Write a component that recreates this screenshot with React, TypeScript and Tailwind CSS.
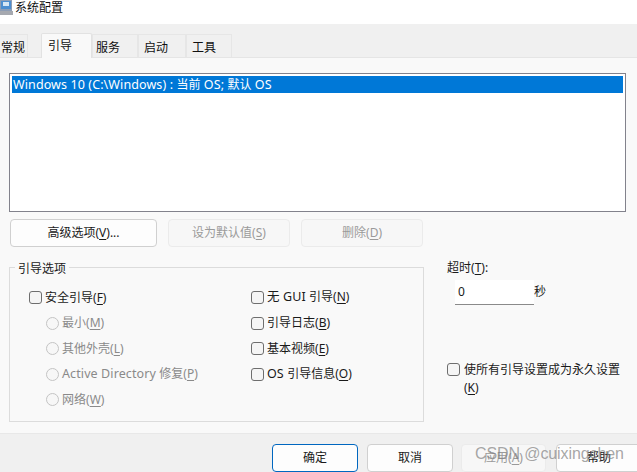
import { ReactNode } from "react";

const FONT = "font-['Noto_Sans','Noto_Sans_CJK_SC',sans-serif]";

function Key({ k }: { k: string }) {
  return (
    <>
      (<span className="underline underline-offset-2">{k}</span>)
    </>
  );
}

// latin runs are a little wider than the CJK size in the reference
function Latin({ children }: { children: ReactNode }) {
  return <span className="text-[12.5px] tracking-[0.1px]">{children}</span>;
}

function DialogButton({
  children,
  disabled,
  primary,
  className,
}: {
  children: ReactNode;
  disabled?: boolean;
  primary?: boolean;
  className: string;
}) {
  let look = "border-[#d0d0d0] bg-[#fdfdfd] text-[#1a1a1a]";
  if (disabled) look = "border-[#ebebeb] bg-[#f7f7f7] text-[#9a9a9a]";
  if (primary) look = "border-[#0067c0] bg-[#fdfdfd] text-[#1a1a1a]";
  return (
    <div
      className={`flex h-[28px] shrink-0 items-center justify-center rounded-[4px] border text-[12px] ${look} ${className}`}
    >
      {children}
    </div>
  );
}

function Check({ children }: { children: ReactNode }) {
  return (
    <div className="flex h-[25.5px] items-center text-[12px] text-[#1a1a1a]">
      <span className="mr-[3px] h-[13px] w-[13px] shrink-0 rounded-[3px] border border-[#6e6e6e] bg-[#f5f5f5]" />
      <span>{children}</span>
    </div>
  );
}

function Radio({ children }: { children: ReactNode }) {
  return (
    <div className="flex h-[25.5px] items-center pl-[17px] text-[12px] text-[#8a8a8a]">
      <span className="mr-[3px] h-[13px] w-[13px] shrink-0 rounded-full border border-[#c4c4c4] bg-[#f7f7f7]" />
      <span>{children}</span>
    </div>
  );
}

function Tab({ label, active, className }: { label: string; active?: boolean; className: string }) {
  if (active) {
    return (
      <div
        className={`z-10 -mb-px flex h-[25px] items-center justify-start rounded-t-[2px] border border-b-0 border-[#e2e2e2] bg-[#f9f9f9] pb-[1px] text-[12px] text-[#111] ${className}`}
      >
        {label}
      </div>
    );
  }
  return (
    <div
      className={`flex h-[23px] items-center justify-start border border-b-0 border-[#e6e6e6] bg-[#f0f0f0] pt-[3px] text-[12px] text-[#111] ${className}`}
    >
      {label}
    </div>
  );
}

export default function App() {
  return (
    <div className={`relative flex h-[472px] w-[637px] flex-col overflow-hidden bg-[#f9f9f9] ${FONT}`}>
      {/* title bar */}
      <div className="flex h-[24px] shrink-0 items-start bg-white">
        <svg width="14" height="16" viewBox="0 0 14 16" className="mr-[1px] shrink-0">
          <rect x="0" y="0" width="12" height="11" fill="#8d9db5" />
          <rect x="1" y="1" width="10" height="8" fill="#4d8ed0" />
          <rect x="3" y="2" width="6" height="4" fill="#d6e6f5" />
          <rect x="0" y="11" width="13" height="4" fill="#a6a9b0" />
        </svg>
        <span className="text-[12px] leading-[16px] text-[#111]">系统配置</span>
      </div>

      {/* tab strip */}
      <div className="flex h-[34px] shrink-0 items-end border-b border-[#e5e5e5] bg-[#f0f0f0]">
        <Tab label="常规" className="-ml-[1px] w-[29px] pl-[1px]" />
        <div className="w-[13px]" />
        <Tab label="引导" active className="w-[51px] pl-[6px]" />
        <Tab label="服务" className="w-[46px] pl-[3px]" />
        <Tab label="启动" className="w-[48px] pl-[5px]" />
        <Tab label="工具" className="w-[46px] pl-[5px]" />
      </div>

      {/* body */}
      <div className="flex flex-1 flex-col px-[9px] pt-[15px]">
        <div className="h-[139px] w-[617px] border border-[#82828c] bg-white p-[2px]">
          <div className="flex h-[17px] items-center whitespace-pre bg-[#0078d7] pt-[1px] pl-[1px] text-[12px] text-white">
            <Latin>Windows 10 (C:\Windows) : </Latin>当前<Latin> OS; </Latin>默认<Latin> OS</Latin>
          </div>
        </div>

        <div className="mt-[7px] flex pl-[1px]">
          <DialogButton className="w-[147px]">
            高级选项
            <Key k="V" />
            ...
          </DialogButton>
          <DialogButton disabled className="ml-[11px] w-[122px]">
            设为默认值
            <Key k="S" />
          </DialogButton>
          <DialogButton disabled className="ml-[11px] w-[122px]">
            删除
            <Key k="D" />
          </DialogButton>
        </div>

        <div className="mt-[20px] flex">
          <div className="relative h-[155px] w-[415px] border border-[#dcdcdc] pt-[17px] pl-[19px]">
            <span className="absolute -top-[8px] left-[5px] bg-[#f9f9f9] px-[3px] text-[12px] text-[#1a1a1a]">
              引导选项
            </span>
            <div className="grid grid-cols-[222px_1fr]">
              <div>
                <Check>
                  安全引导
                  <Key k="F" />
                </Check>
                <Radio>
                  最小
                  <Key k="M" />
                </Radio>
                <Radio>
                  其他外壳
                  <Key k="L" />
                </Radio>
                <Radio>
                  <Latin>Active Directory </Latin>修复
                  <Key k="P" />
                </Radio>
                <Radio>
                  网络
                  <Key k="W" />
                </Radio>
              </div>
              <div>
                <Check>
                  <Latin>无 GUI </Latin>引导
                  <Key k="N" />
                </Check>
                <Check>
                  引导日志
                  <Key k="B" />
                </Check>
                <Check>
                  基本视频
                  <Key k="E" />
                </Check>
                <Check>
                  <Latin>OS </Latin>引导信息
                  <Key k="O" />
                </Check>
              </div>
            </div>
          </div>

          <div className="ml-[23px] flex w-[180px] flex-col text-[12px] text-[#1a1a1a]">
            <div className="-mt-[8px] leading-[17px]">
              超时
              <Key k="T" />:
            </div>
            <div className="mt-[4px] flex items-center pl-[8px]">
              <div className="flex h-[25px] w-[79px] items-center border-b border-[#8a8a8a] bg-white pb-[1px] pl-[3px]">
                0
              </div>
              <span className="-mt-[1px]">秒</span>
            </div>
            <div className="mt-[56px] flex items-start">
              <span className="mt-[2px] mr-[4px] h-[13px] w-[13px] shrink-0 rounded-[3px] border border-[#6e6e6e] bg-[#f5f5f5]" />
              <span className="leading-[18px]">
                使所有引导设置成为永久设置
                <br />
                <Key k="K" />
              </span>
            </div>
          </div>
        </div>
      </div>

      {/* footer */}
      <div className="flex h-[39px] shrink-0 items-start justify-start border-t border-[#e8e8e8] bg-[#f0f0f0] pt-[10px] pl-[272px]">
        <DialogButton primary className="w-[86px]">
          确定
        </DialogButton>
        <DialogButton className="ml-[9px] w-[86px]">取消</DialogButton>
        <DialogButton disabled className="ml-[8px] w-[85px]">
          应用
          <Key k="A" />
        </DialogButton>
        <DialogButton className="ml-[10px] w-[86px]">帮助</DialogButton>
      </div>

      {/* watermark */}
      <span className="absolute top-[444px] left-[475px] font-['Liberation_Sans',sans-serif] text-[16px] leading-[20px] tracking-[-0.1px] whitespace-nowrap text-[#808080b3]">
        CSDN @cuixingchen
      </span>
    </div>
  );
}
